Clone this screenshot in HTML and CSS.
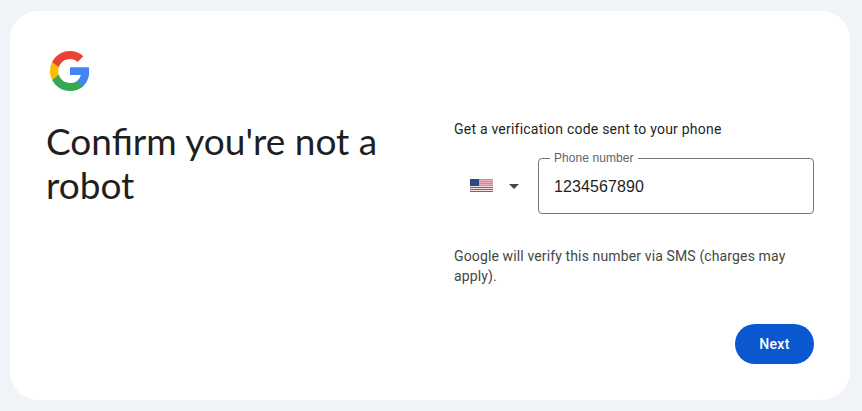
FILE: index.html
```
<!DOCTYPE html>
<html lang="en">

<head>
  <meta charset="UTF-8">
  <meta name="viewport" content="width=device-width, initial-scale=1.0">
  <title>Confirm you're not a robot</title>
  <link rel="stylesheet" href="styles.css">
</head>

<body>

  <main class="card">
    <svg class="logo" viewBox="2 2 44 44">
      <path fill="#4285F4" d="M45.12 24.5c0-1.56-.14-3.06-.4-4.5H24v8.51h11.84c-.51 2.75-2.06 5.08-4.39 6.64v5.52h7.11c4.16-3.83 6.56-9.47 6.56-16.17z" />
      <path fill="#34A853" d="M24 46c5.94 0 10.92-1.97 14.56-5.33l-7.11-5.52c-1.97 1.32-4.49 2.1-7.45 2.1-5.73 0-10.58-3.87-12.31-9.07H4.34v5.7C7.96 41.07 15.4 46 24 46z" />
      <path fill="#FBBC05" d="M11.69 28.18C11.25 26.86 11 25.45 11 24s.25-2.86.69-4.18v-5.7H4.34C2.85 17.09 2 20.45 2 24s.85 6.91 2.34 9.88l7.35-5.7z" />
      <path fill="#EA4335" d="M24 10.75c3.23 0 6.13 1.11 8.41 3.29l6.31-6.31C34.91 4.18 29.93 2 24 2 15.4 2 7.96 6.93 4.34 14.12l7.35 5.7c1.73-5.2 6.58-9.07 12.31-9.07z" />
    </svg>
    <div class="content">
      <h1 class="title">Confirm you're not a<br>robot</h1>
      <form class="form">
        <p class="label">Get a verification code sent to your phone</p>
        <div class="phone">
          <div class="country">
            <svg class="flag" viewBox="0 0 23 13">
              <path fill="#eeb0ba" d="M0 0h23v7H0z" />
              <path fill="#f6e0e4" d="M0 7h23v6H0z" />
              <path fill="#e07f8f" d="M0 0h23v1H0zM0 2h23v1H0zM0 4h23v1H0zM0 6h23v1H0z" />
              <path fill="#d23c58" d="M0 8h23v1H0zM0 10h23v1H0zM0 12h23v1H0z" />
              <path fill="#2e4a82" d="M0 0h9v7H0z" />
            </svg>
            <span class="arrow"></span>
          </div>
          <fieldset class="field">
            <legend>Phone number</legend>
            <input class="number" type="text" value="1234567890">
          </fieldset>
        </div>
        <p class="note">Google will verify this number via SMS (charges may<br>apply).</p>
        <button class="next" type="button">Next</button>
      </form>
    </div>
  </main>

</body>

</html>
```
FILE: styles.css
```
* {
  box-sizing: border-box;
}

body {
  margin: 0;
  padding: 11px 12px 11px 10px;
  height: 100vh;
  background-color: #f0f4f9;
  color: #1f1f1f;
  font-family: Roboto, sans-serif;
}

.card {
  height: 389px;
  padding: 36px;
  border-radius: 28px;
  background-color: #fff;
}

.logo {
  display: block;
  width: 40px;
  height: 40px;
  margin: 4px;
}

.content {
  display: grid;
  grid-template-columns: 1fr 360px;
  gap: 48px;
}

.title {
  margin: 24px 0 0;
  font-family: Lato, sans-serif;
  font-size: 37px;
  font-weight: 400;
  line-height: 44px;
  white-space: nowrap;
}

.form {
  display: flex;
  flex-direction: column;
  padding-top: 24px;
}

.label {
  margin: 0;
  font-size: 14px;
  letter-spacing: 0.22px;
  line-height: 20px;
}

.phone {
  display: flex;
  margin-top: 12px;
}

.country {
  display: flex;
  align-items: center;
  width: 84px;
  height: 69px;
  padding-left: 16px;
}

.flag {
  width: 23px;
  height: 13px;
}

.arrow {
  margin: 1px 0 0 16px;
  border: 5px solid transparent;
  border-top-color: #444746;
  border-bottom: 0;
}

.field {
  flex: 1;
  height: 63px;
  margin: 0;
  padding: 2px 15px 0;
  border: 1px solid #747775;
  border-radius: 4px;
}

.field legend {
  margin-left: -4px;
  padding: 0 4px;
  color: #5f6368;
  font-family: "Liberation Sans", sans-serif;
  font-size: 12px;
  letter-spacing: 0.08px;
  line-height: 14px;
}

.number {
  width: 100%;
  height: 40px;
  padding: 0;
  border: 0;
  outline: 0;
  color: #1f1f1f;
  font: 16px "Liberation Sans", sans-serif;
  letter-spacing: 0.1px;
}

.note {
  margin: 26px 0 0;
  color: #444746;
  font-size: 14px;
  letter-spacing: 0.13px;
  line-height: 20px;
}

.next {
  align-self: flex-end;
  width: 79px;
  height: 40px;
  margin-top: 38px;
  border: 0;
  border-radius: 20px;
  background-color: #0b57d0;
  color: #fff;
  font: 500 14px Roboto, sans-serif;
  letter-spacing: 0.4px;
}
```
